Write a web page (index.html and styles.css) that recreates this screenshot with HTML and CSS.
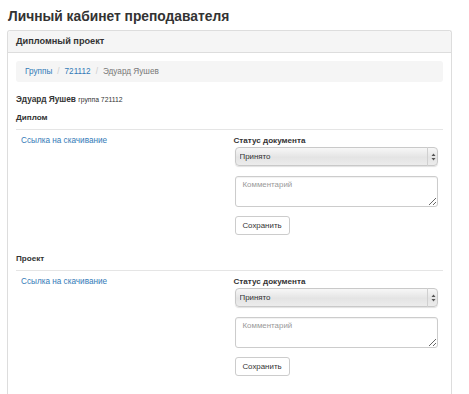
FILE: index.html
```html
<!DOCTYPE html>
<html lang="ru">
<head>
<meta charset="utf-8">
<title>Личный кабинет преподавателя</title>
<link rel="stylesheet" href="styles.css">
</head>
<body>
<div class="page">
  <h1 class="title">Личный кабинет преподавателя</h1>
  <div class="panel">
    <div class="panel-heading">Дипломный проект</div>
    <div class="panel-body">
      <ol class="breadcrumb">
        <li><a href="#">Группы</a></li>
        <li class="sep">/</li>
        <li><a href="#">721112</a></li>
        <li class="sep">/</li>
        <li class="active">Эдуард Яушев</li>
      </ol>
      <div class="student"><b>Эдуард Яушев</b> <small>группа 721112</small></div>

      <div class="doc">
        <div class="doc-title">Диплом</div>
        <div class="doc-row">
          <div class="col"><a href="#" class="link">Ссылка на скачивание</a></div>
          <div class="col form">
            <div class="label">Статус документа</div>
            <div class="select-wrap">
              <select class="select"><option>Принято</option></select>
              <span class="arrows"><svg width="5" height="8" viewBox="0 0 5 8"><path d="M2.5 0.5L4.5 3H0.5Z M2.5 7.5L4.5 5H0.5Z" fill="#555"/></svg></span>
            </div>
            <textarea class="comment" placeholder="Комментарий"></textarea>
            <button class="btn">Сохранить</button>
          </div>
        </div>
      </div>

      <div class="doc">
        <div class="doc-title">Проект</div>
        <div class="doc-row">
          <div class="col"><a href="#" class="link">Ссылка на скачивание</a></div>
          <div class="col form">
            <div class="label">Статус документа</div>
            <div class="select-wrap">
              <select class="select"><option>Принято</option></select>
              <span class="arrows"><svg width="5" height="8" viewBox="0 0 5 8"><path d="M2.5 0.5L4.5 3H0.5Z M2.5 7.5L4.5 5H0.5Z" fill="#555"/></svg></span>
            </div>
            <textarea class="comment" placeholder="Комментарий"></textarea>
            <button class="btn">Сохранить</button>
          </div>
        </div>
      </div>
    </div>
  </div>
</div>
</body>
</html>
```

FILE: styles.css
```css
html, body {
  margin: 0;
  padding: 0;
  background: #fff;
}
body {
  font-family: "Liberation Sans", Arial, sans-serif;
  color: #333;
  font-size: 8.2px;
  overflow: hidden;
}
a {
  color: #337ab7;
  text-decoration: none;
}
.page {
  padding: 0 17px 0 7px;
}
.title {
  margin: 0;
  padding: 7px 0 0 1px;
  height: 23px;
  font-size: 13.8px;
  font-weight: bold;
  line-height: 20px;
  color: #333;
}
.panel {
  border: 1px solid #ddd;
  border-bottom: none;
  border-radius: 3px 3px 0 0;
  height: 363px;
  overflow: hidden;
}
.panel-heading {
  background: #f5f5f5;
  border-bottom: 1px solid #ddd;
  height: 21px;
  line-height: 21px;
  padding: 0 8px;
  font-size: 9.2px;
  font-weight: bold;
  color: #333;
  border-radius: 3px 3px 0 0;
}
.panel-body {
  padding: 8px;
}
.breadcrumb {
  list-style: none;
  margin: 0;
  padding: 0 9px;
  height: 21px;
  background: #f5f5f5;
  border-radius: 3px;
  display: flex;
  align-items: center;
  gap: 5px;
  font-size: 8.2px;
}
.breadcrumb .sep {
  color: #ccc;
}
.breadcrumb .active {
  color: #777;
}
.student {
  margin-top: 12px;
  height: 10px;
  line-height: 10px;
  font-size: 8.3px;
}
.student small {
  font-size: 6.8px;
  color: #333;
}
.doc-title {
  margin-top: 8px;
  height: 11px;
  line-height: 11px;
  font-weight: bold;
  font-size: 8.1px;
  padding-bottom: 6px;
  border-bottom: 1px solid #e5e5e5;
}
.doc + .doc .doc-title {
  margin-top: 18px;
}
.doc-row {
  display: flex;
  padding-top: 5px;
}
.col {
  flex: 1 1 0;
  padding: 0 5px;
}
.link {
  font-size: 8.2px;
  line-height: 11px;
}
.form {
  display: flex;
  flex-direction: column;
  align-items: flex-start;
}
.label {
  font-weight: bold;
  font-size: 8.1px;
  line-height: 11px;
  margin-left: -1px;
}
.select-wrap {
  position: relative;
  width: 100%;
  margin-top: 1px;
}
.select {
  appearance: none;
  -webkit-appearance: none;
  display: block;
  width: 100%;
  height: 19px;
  margin: 0;
  padding: 0 4px;
  border: 1px solid #c9c9c9;
  border-radius: 4px;
  background: linear-gradient(#f7f7f7, #e4e4e4 55%, #ececec);
  box-shadow: 0 1px 1px rgba(0,0,0,0.12);
  font-family: "Liberation Sans", Arial, sans-serif;
  font-size: 7.9px;
  color: #333;
}
.arrows {
  position: absolute;
  right: 0;
  top: 0;
  bottom: 0;
  width: 10px;
  border-left: 1px solid #d0d0d0;
  display: flex;
  align-items: center;
  justify-content: center;
}
.comment {
  display: block;
  box-sizing: border-box;
  width: 100%;
  height: 31px;
  margin: 10px 0 0;
  padding: 3px 7px;
  border: 1px solid #ccc;
  border-radius: 3px;
  box-shadow: inset 0 1px 1px rgba(0,0,0,0.06);
  font-family: "Liberation Sans", Arial, sans-serif;
  font-size: 7.9px;
  color: #333;
  resize: vertical;
}
.comment::placeholder {
  color: #999;
}
.btn {
  margin-top: 9px;
  height: 19px;
  width: 55px;
  padding: 0;
  background: #fff;
  border: 1px solid #ccc;
  border-radius: 3px;
  font-family: "Liberation Sans", Arial, sans-serif;
  font-size: 7.9px;
  color: #333;
}
```
